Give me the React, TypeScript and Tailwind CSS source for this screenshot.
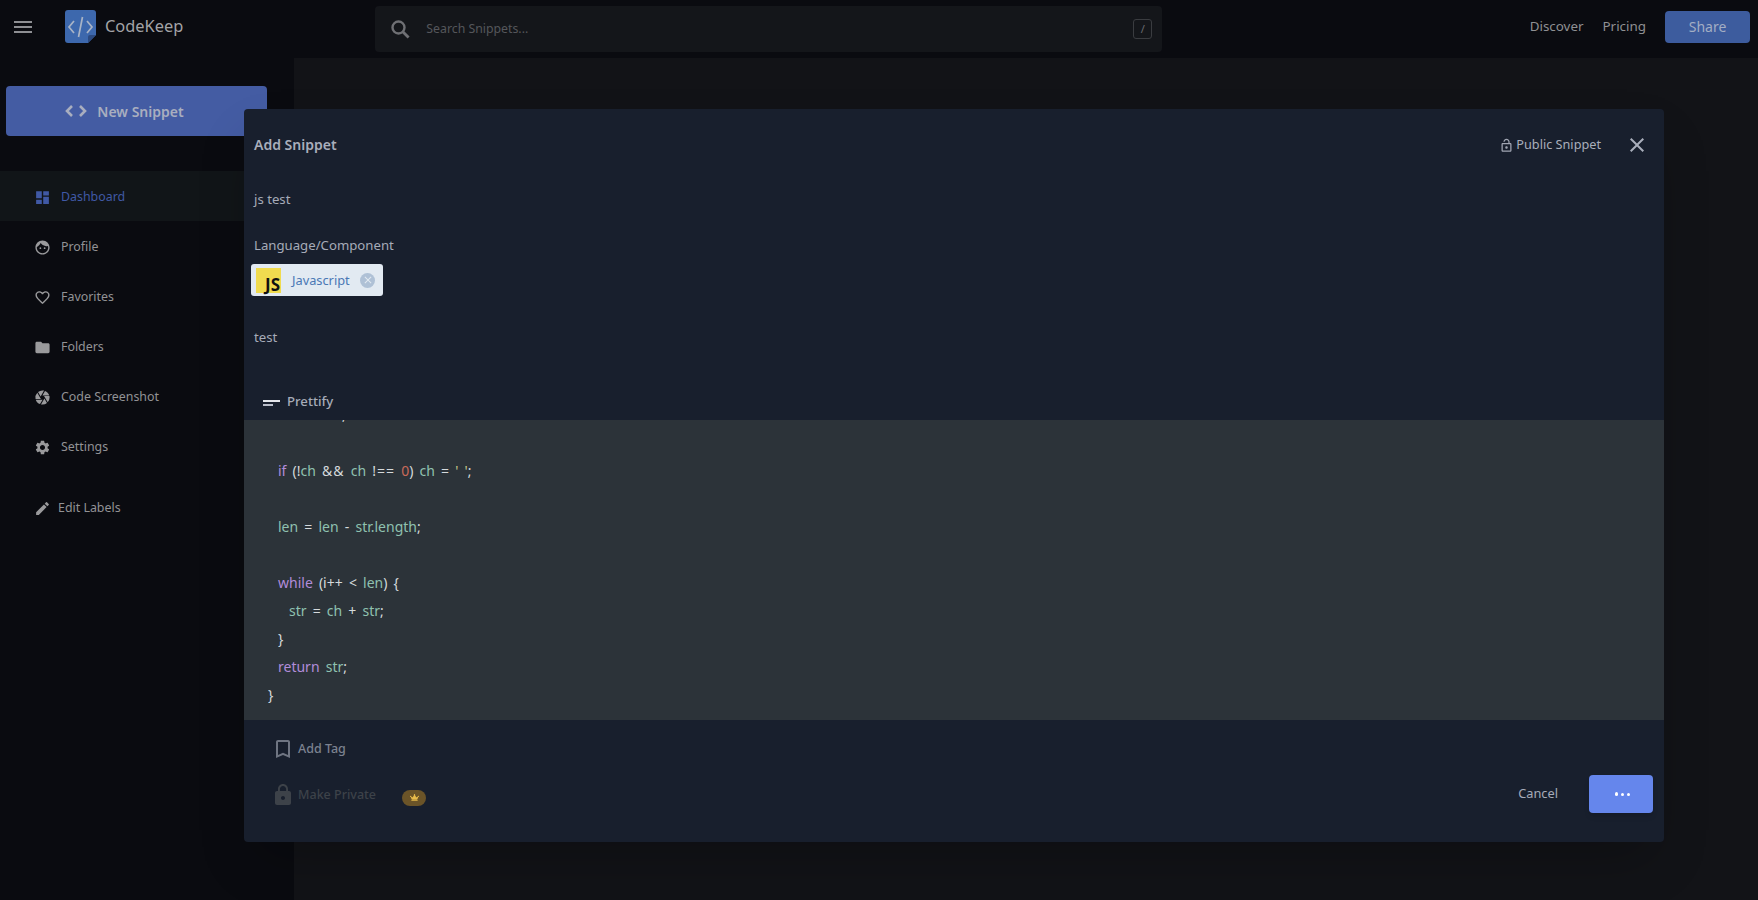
import React from "react";
import {
  MdMenu, MdDashboard, MdFace, MdFavoriteBorder, MdFolder, MdCamera, MdSettings,
  MdEdit, MdClose, MdBookmarkBorder, MdLock, MdOutlineLockOpen,
} from "react-icons/md";
import { FaCrown } from "react-icons/fa";

const navItems = [
  { label: "Dashboard", Icon: MdDashboard, active: true },
  { label: "Profile", Icon: MdFace },
  { label: "Favorites", Icon: MdFavoriteBorder },
  { label: "Folders", Icon: MdFolder },
  { label: "Code Screenshot", Icon: MdCamera },
  { label: "Settings", Icon: MdSettings },
];

const K = ({ children }: { children: React.ReactNode }) => <span className="text-[#b18cd9]">{children}</span>;
const V = ({ children }: { children: React.ReactNode }) => <span className="text-[#8fc1b0]">{children}</span>;
const O = ({ children }: { children: React.ReactNode }) => <span className="tracking-[1px]">{children}</span>;

function Logo() {
  return (
    <svg width="31" height="33" viewBox="0 0 31 33" className="shrink-0">
      <path d="M3 0H28a3 3 0 0 1 3 3V25L23 33H3a3 3 0 0 1-3-3V3a3 3 0 0 1 3-3Z" fill="#3d68ad" />
      <path d="M31 25H25a2 2 0 0 0-2 2V33Z" fill="#2c4a80" />
      <path d="M9 11 4 17l5 6M22 11l5 6-5 6M17.5 7l-4 20" fill="none" stroke="#a9b4c6" strokeWidth="1.7" />
    </svg>
  );
}

function JsIcon() {
  return (
    <div className="w-[25px] h-[25px] bg-[#f0db4f] flex items-end justify-end pr-[1px] shrink-0">
      <span className="text-[#111] text-[17px] leading-[17px] font-bold">JS</span>
    </div>
  );
}

export default function App() {
  return (
    <div className="relative h-[900px] w-[1758px] overflow-hidden bg-[#121317] text-[12.4px] font-['Noto_Sans','Open_Sans',sans-serif]">
      <header className="h-[58px] bg-[#0a0b10] flex items-center pb-[5px]">
        <MdMenu className="ml-[11px] text-[#8e8f93]" size={24} />
        <div className="ml-[30px]"><Logo /></div>
        <span className="ml-[9px] text-[16.4px] text-[#a3a4a7]">CodeKeep</span>
        <div className="ml-[192px] mt-[5px] w-[787px] h-[46px] bg-[#14161a] rounded flex items-center pl-[16px] pr-[10px]">
          <svg width="19" height="19" viewBox="0 0 19 19" fill="none" stroke="#6f7074" className="shrink-0">
            <circle cx="7.5" cy="7.5" r="6" strokeWidth="2.4" />
            <path d="M11.8 11.8 17.6 17.6" strokeWidth="2.8" />
          </svg>
          <span className="ml-[16px] text-[#55565b] text-[12.3px]">Search Snippets...</span>
          <span className="ml-auto w-[19px] h-[20px] border border-[#3a3c40] rounded-[3px] flex items-center justify-center text-[#6a6b6f] text-[11px]">/</span>
        </div>
        <nav className="ml-auto flex items-center">
          <span className="text-[#8f9093] text-[13.4px]">Discover</span>
          <span className="ml-[19px] text-[#8f9093] text-[13.4px]">Pricing</span>
          <button className="ml-[19px] mr-[8px] w-[85px] h-[32px] rounded bg-[#3d5c9e] text-[#a3aec4] text-[14px]">Share</button>
        </nav>
      </header>

      <div className="flex h-[842px]">
        <aside className="w-[294px] bg-[#0a0b10] shrink-0 pt-[28px]">
          <button className="ml-[6px] w-[261px] h-[50px] rounded bg-[#445ca3] text-[#a9aebf] text-[14px] font-semibold flex items-center justify-center pr-[24px]">
            <svg width="22" height="12" viewBox="0 0 22 12" fill="none" stroke="currentColor" strokeWidth="2.6" className="mr-[10px]">
              <path d="M7 1 2 6l5 5M15 1l5 5-5 5" />
            </svg>
            New Snippet
          </button>
          <ul className="mt-[35px]">
            {navItems.map(({ label, Icon, active }) => (
              <li key={label} className={`h-[50px] flex items-center pl-[34px] pt-[2px] ${active ? "bg-[#111518] text-[#4059a5]" : "text-[#929295]"}`}>
                <Icon size={17} className={active ? "text-[#4059a5]" : "text-[#9a9a9c]"} />
                <span className="ml-[10px]">{label}</span>
              </li>
            ))}
          </ul>
          <div className="mt-[11px] h-[50px] flex items-center pl-[34px] pt-[2px] text-[#929295]">
            <MdEdit size={17} className="text-[#9a9a9c]" />
            <span className="ml-[7px]">Edit Labels</span>
          </div>
        </aside>
        <main className="flex-1" />
      </div>

      {/* dialog floats over the page */}
      <div className="absolute left-[244px] top-[109px] w-[1420px] h-[733px] rounded bg-[#181f2d] shadow-2xl flex flex-col text-[13.2px]">
        <div className="h-[72px] shrink-0 flex items-center pl-[10px] pr-[15px]">
          <span className="text-[14px] font-semibold text-[#a9aebb] -mt-[1px]">Add Snippet</span>
          <MdOutlineLockOpen size={15} className="ml-auto text-[#a0a5b2]" />
          <span className="ml-[2px] text-[#a9aebb] text-[12.7px]">Public Snippet</span>
          <MdClose size={24} className="ml-[24px] text-[#a9aebb]" />
        </div>
        <div className="pl-[10px] text-[#a6abb8] mt-[6px] h-[24px] leading-[24px]">js test</div>
        <div className="pl-[10px] text-[#a6abb8] mt-[22px] h-[24px] leading-[24px]">Language/Component</div>
        <div className="pl-[7px] mt-[7px]">
          <div className="inline-flex items-center h-[32px] w-[132px] rounded-[3px] bg-[#e2eaf2] pl-[5px]">
            <JsIcon />
            <span className="ml-[11px] pt-[1px] text-[#4a78b5] text-[12.8px]">Javascript</span>
            <span className="ml-auto mr-[8px] w-[15px] h-[15px] rounded-full bg-[#afc1d6] flex items-center justify-center">
              <MdClose size={12} className="text-[#e2eaf2]" />
            </span>
          </div>
        </div>
        <div className="pl-[10px] text-[#a6abb8] mt-[29px] h-[24px] leading-[24px]">test</div>
        <div className="h-[40px] mt-[31px] pt-[3px] shrink-0 flex items-center pl-[19px] text-[#a6abb8] font-medium">
          <svg width="18" height="8" viewBox="0 0 18 8" className="mr-[6px] mt-[2px]">
            <rect x="0" y="5" width="10" height="2" fill="#b8bcc8" />
            <rect x="0" y="1" width="17" height="2" fill="#e3e5ea" />
          </svg>
          Prettify
        </div>
        <div className="h-[300px] shrink-0 bg-[#2c3339] overflow-hidden relative pl-[24px] text-[14px] leading-[28px] text-[#d5dadc] [word-spacing:2.5px]">
          <div className="absolute left-[98px] -top-[19px]">;</div>
          <div className="pt-[37px] pl-[10px]"><K>if</K> (!<V>ch</V> <O>&amp;&amp;</O> <V>ch</V> <O>!==</O> <span className="text-[#c96a5a]">0</span>) <V>ch</V> = <span className="text-[#c5c98a]">' '</span>;</div>
          <div className="pl-[10px] mt-[28px]"><V>len</V> = <V>len</V> - <V>str.length</V>;</div>
          <div className="pl-[10px] mt-[28px]"><K>while</K> (i++ &lt; <V>len</V>) {"{"}</div>
          <div className="pl-[21px]"><V>str</V> = <V>ch</V> + <V>str</V>;</div>
          <div className="pl-[10px]">{"}"}</div>
          <div className="pl-[10px]"><K>return</K> <V>str</V>;</div>
          <div>{"}"}</div>
        </div>
        <div className="flex-1 relative flex items-start pl-[31px] pr-[11px]">
          <div>
            <div className="flex items-center h-[24px] mt-[17px] text-[#7c8290] font-medium text-[12.5px]">
              <MdBookmarkBorder size={24} className="-ml-[4px] text-[#6f7582]" />
              <span className="ml-[3px]">Add Tag</span>
            </div>
            <div className="flex items-center h-[24px] mt-[22px] text-[#3d4249] font-medium text-[12.5px]">
              <MdLock size={24} className="-ml-[4px] text-[#3d4249]" />
              <span className="ml-[3px]">Make Private</span>
              <span className="ml-[26px] mt-[5px] w-[24px] h-[16px] rounded-full bg-[#6b5428] flex items-center justify-center">
                <FaCrown size={9} className="text-[#e8bb4a]" />
              </span>
            </div>
          </div>
          <div className="ml-auto mt-[55px] flex items-center">
            <span className="text-[#a6abb8] mr-[31px] text-[12.8px] -mt-[2px]">Cancel</span>
            <button className="w-[64px] h-[38px] rounded bg-[#6586ec] shadow-md flex items-center justify-center gap-[2.5px] pl-[3px]">
              <span className="w-[3.5px] h-[3.5px] rounded-full bg-white -mt-[1px]" />
              <span className="w-[3.5px] h-[3.5px] rounded-full bg-white" />
              <span className="w-[3.5px] h-[3.5px] rounded-full bg-white" />
            </button>
          </div>
        </div>
      </div>
    </div>
  );
}
